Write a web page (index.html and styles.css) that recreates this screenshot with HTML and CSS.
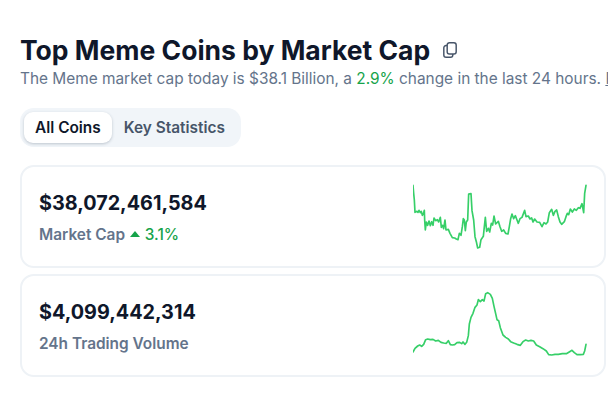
FILE: index.html
```html
<!DOCTYPE html>
<html lang="en">
<head>
    <meta charset="UTF-8">
    <title>Top Meme Coins by Market Cap</title>
    <link rel="stylesheet" href="styles.css">
</head>
<body>
    <div class="page">
        <div class="title-row">
            <h1>Top Meme Coins by Market Cap</h1>
            <svg class="copy-icon" width="18" height="18" viewBox="0 0 16 16" fill="none">
                <rect x="5.5" y="1.5" width="8" height="10" rx="2"/>
                <path d="M5.5 4H4.5A2 2 0 0 0 2.500 6V12.500A2 2 0 0 0 4.500 14.500H8.500A2 2 0 0 0 10.500 12.500V11.500"/>
            </svg>
        </div>
        <p class="summary">The Meme market cap today is $38.1 Billion, a <span class="up">2.9%</span> change in the last 24 hours. <a href="#">Read more</a></p>

        <div class="tabs">
            <div class="tab active">All Coins</div>
            <div class="tab">Key Statistics</div>
        </div>

        <div class="card">
            <div class="card-text">
                <div class="value">$38,072,461,584</div>
                <div class="label">Market Cap <span class="caret"></span> <span class="up">3.1%</span></div>
            </div>
            <svg class="spark" width="174" height="70" viewBox="40 36 522 210" fill="none">
                <polyline points="40,46 42,70 44,90 46,127 52,124 55,127 58,121 62,128 65,124 68,136 71,132 74,121 75,150 77,180 80,156 84,166 88,153 92,167 96,155 100,166 103,144 108,152 113,149 117,156 122,142 125,172 129,166 132,176 136,150 139,180 146,178 151,190 158,203 165,204 170,207 175,209 179,190 184,196 188,170 191,146 194,150 197,182 200,156 204,150 207,72 214,71 217,122 222,150 226,200 230,215 234,234 240,232 244,209 251,199 254,170 257,142 261,184 266,175 270,186 275,160 279,165 283,138 288,162 296,154 301,170 306,184 312,180 318,190 325,192 329,170 333,146 337,132 342,146 347,137 352,150 356,160 361,146 367,142 375,121 379,140 386,138 391,147 396,144 400,156 405,147 412,156 420,157 427,170 433,158 439,162 444,156 449,128 456,118 461,136 466,124 471,120 476,140 481,156 486,163 494,155 499,140 503,130 507,134 512,117 518,126 524,117 530,121 536,113 541,115 547,101 552,128 555,70 559,46"/>
            </svg>
        </div>

        <div class="card">
            <div class="card-text">
                <div class="value">$4,099,442,314</div>
                <div class="label">24h Trading Volume</div>
            </div>
            <svg class="spark" width="174" height="70" viewBox="40 36 522 210" fill="none">
                <polyline points="40,219 46,208 54,201 60,198 66,202 72,196 78,182 84,180 92,182 100,181 108,186 116,184 124,190 132,192 140,193 146,185 152,197 158,198 165,197 172,191 180,190 186,194 190,189 196,196 201,190 206,170 209,135 214,115 220,103 226,85 232,78 236,62 242,68 248,62 253,66 258,44 264,41 272,46 278,58 283,82 288,104 292,122 297,125 302,146 310,168 318,175 326,180 333,188 342,192 352,196 362,199 370,188 378,183 386,186 394,184 402,186 410,198 420,203 430,209 440,216 447,227 456,228 466,226 476,226 488,224 500,224 510,218 517,214 524,221 532,227 542,227 551,226 555,216 559,196"/>
            </svg>
        </div>
    </div>
</body>
</html>
```

FILE: styles.css
```css
* {
    box-sizing: border-box;
}

html, body {
    margin: 0;
    height: 100%;
    overflow: hidden;
    background-color: #fff;
}

body {
    font-family: Inter, "Noto Sans", sans-serif;
    color: #0f172a;
}

.page {
    padding: 34px 4px 0 20px;
}

.title-row {
    display: flex;
    align-items: center;
    gap: 11px;
}

h1 {
    margin: 0;
    font-size: 26.5px;
    line-height: 32px;
    font-weight: 700;
    white-space: nowrap;
}

.copy-icon {
    stroke: #475569;
    stroke-width: 1.3;
}

.summary {
    margin: 1px -2px -1px 0;
    overflow: hidden;
    font-size: 15.4px;
    line-height: 24px;
    color: #64748b;
    white-space: nowrap;
}

.summary a {
    color: #64748b;
}

.up {
    color: #16a34a;
}

.tabs {
    display: inline-flex;
    gap: 1px;
    margin-top: 18px;
    padding: 4px 5px 4px 4px;
    border-radius: 14px;
    background-color: #f1f5f9;
    vertical-align: top;
}

.tab {
    padding: 0 11px;
    font-size: 15.4px;
    line-height: 31px;
    font-weight: 600;
    color: #475569;
}

.tab.active {
    border-radius: 9px;
    background-color: #fff;
    color: #0f172a;
    box-shadow: 0 1px 3px rgba(71, 85, 105, 0.3);
}

.card {
    display: flex;
    align-items: center;
    justify-content: space-between;
    height: 103px;
    margin-bottom: 6px;
    padding: 1px 17px 0 17px;
    border: 2px solid #eef2f6;
    border-radius: 14px;
}

.tabs + .card {
    margin-top: 18px;
}

.value {
    font-size: 19.8px;
    line-height: 28px;
    font-weight: 700;
}

.label {
    margin-top: 7px;
    font-size: 15.4px;
    line-height: 22px;
    font-weight: 600;
    color: #64748b;
}

.label .up {
    font-weight: 500;
}

.caret {
    display: inline-block;
    margin: 0 1px;
    vertical-align: 3px;
    border-left: 5.5px solid transparent;
    border-right: 5.5px solid transparent;
    border-bottom: 6px solid #16a34a;
}

.spark polyline {
    stroke: #36cf68;
    stroke-width: 5;
    stroke-linejoin: round;
    stroke-linecap: round;
}
```
